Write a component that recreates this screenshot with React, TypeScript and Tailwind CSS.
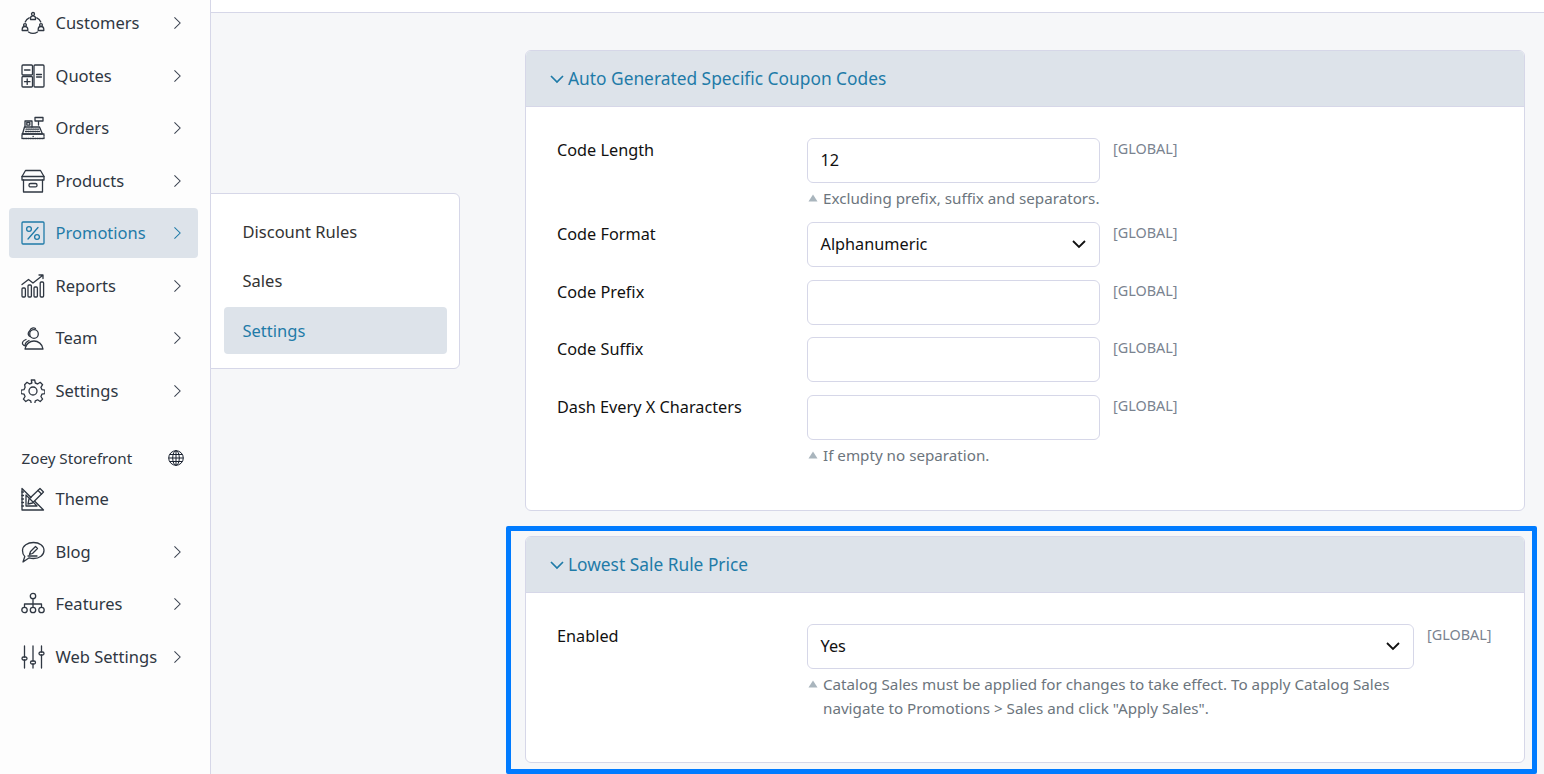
import React from "react";

const S = { fill: "none", stroke: "currentColor", strokeWidth: 1.3, strokeLinecap: "round" as const, strokeLinejoin: "round" as const };

const Svg = ({ children }: { children: React.ReactNode }) => (
  <svg viewBox="0 0 24 24" className="w-6 h-6 shrink-0" {...S}>{children}</svg>
);

const icons: Record<string, React.ReactNode> = {
  customers: (
    <Svg>
      <circle cx="12" cy="3" r="1.5" /><path d="M9.500 8.500v-1.200a2.500 2.500 0 0 1 5 0v1.200z" />
      <circle cx="4" cy="14" r="1.400" /><path d="M1.200 19.500v-1.200a2.800 2.800 0 0 1 5.600 0v1.200z" />
      <circle cx="20" cy="14" r="1.400" /><path d="M17.200 19.500v-1.200a2.800 2.800 0 0 1 5.600 0v1.200z" />
      <path d="M8.200 6.800A8.600 8.600 0 0 0 4.200 11M15.800 6.800a8.600 8.600 0 0 1 4 4.200M7.500 21a8.500 8.500 0 0 0 9 0" />
    </Svg>
  ),
  quotes: (
    <Svg>
      <rect x="1" y="1" width="10.500" height="10" rx="1" /><rect x="1" y="12.500" width="10.500" height="10.500" rx="1" />
      <rect x="13" y="1" width="10" height="22" rx="1" />
      <path d="M3.500 6h5.500M3.500 17.700h5.500M6.200 15v5.400" /><path d="M15.500 10.500h5M15.500 13h5" />
    </Svg>
  ),
  orders: (
    <Svg>
      <path d="M4 11V5h7v6M14 5V1.500h8V5zM17.500 5v4" /><rect x="5.800" y="6.500" width="3" height="2.600" />
      <path d="M3.500 11h15l3 7H1.500z" /><path d="M1 18h22v4.500H1zM5 13.200h13M4.500 15.500h14" strokeDasharray="1.300 1" />
      <path d="M12 20.300h.3" />
    </Svg>
  ),
  products: (
    <Svg>
      <path d="M4.500 1.500h15L23 7.500V11H1V7.500z" /><path d="M1 7.500h22" />
      <path d="M2.500 11v12h19V11" /><rect x="8" y="14.500" width="8" height="3.400" rx="1.500" />
    </Svg>
  ),
  promotions: (
    <Svg>
      <rect x="1" y="1" width="22" height="22" rx="1" />
      <path d="M17 6.500 7 18" /><circle cx="8" cy="8" r="2.400" /><circle cx="16" cy="16" r="2.400" />
    </Svg>
  ),
  reports: (
    <Svg>
      <rect x="1" y="14" width="3.400" height="9" rx="1" /><rect x="7" y="11" width="3.400" height="12" rx="1" />
      <rect x="13" y="13" width="3.400" height="10" rx="1" /><rect x="19.200" y="8" width="3.400" height="15" rx="1" />
      <path d="M1 10.500 7.500 5.500l4.500 3.500 9.500-7.500M18 1h4v3.500" />
    </Svg>
  ),
  team: (
    <Svg>
      <circle cx="13" cy="8" r="4.300" /><path d="M9 4.500A3.600 3.600 0 0 1 14.500 2.500M9 4.500 7.500 6.500a3 3 0 0 0 1.500 4" />
      <path d="M5 13.500Q1 15 1.500 18Q2.500 20 5 20" />
      <path d="M4 23c.5-5 5-8 9-8s8.500 3 9 8z" /><path d="M8 14.500Q4.500 16 4 19" />
    </Svg>
  ),
  settings: (
    <Svg>
      <circle cx="12" cy="12" r="4" />
      <path d="M10.300 1h3.400l.6 3a8.300 8.300 0 0 1 2.300 1l2.600-1.700 2.400 2.400-1.700 2.600a8.300 8.300 0 0 1 1 2.300l3 .6v3.400l-3 .6a8.300 8.300 0 0 1-1 2.300l1.700 2.600-2.400 2.400-2.600-1.700a8.300 8.300 0 0 1-2.300 1l-.6 3h-3.400l-.6-3a8.300 8.300 0 0 1-2.300-1l-2.600 1.700-2.400-2.400 1.700-2.600a8.300 8.300 0 0 1-1-2.300l-3-.6v-3.400l3-.6a8.300 8.300 0 0 1 1-2.300L3.600 5.700 6 3.300 8.600 5a8.300 8.300 0 0 1 2.300-1z" />
    </Svg>
  ),
  theme: (
    <Svg>
      <path d="M1 1.500V23h21.500L14 14.500M1 1.500 10 10.500" /><path d="M1 5h1.500M1 8.500h1.500M1 12h1.500M1 15.500h1.500M1 19h1.500" />
      <path d="M5 8v11h11z" />
      <path d="M8 12 19 1.500l3.500 3.500L11.500 16 7 17z" /><path d="M17 3.500l3.500 3.500" />
    </Svg>
  ),
  blog: (
    <Svg>
      <path d="M12.500 2.500c6 0 10.500 3.500 10.500 8s-4.500 8-10.500 8c-1.500 0-3-.2-4.300-.7L2 22l1.800-5.500C2 15 1.500 12.800 1.500 10.500c0-4.500 5-8 11-8z" />
      <path d="M8.500 14.500l1-3 5-5 2 2-5 5zM7 16h9" />
    </Svg>
  ),
  features: (
    <Svg>
      <circle cx="12" cy="4" r="2.700" /><path d="M12 6.700V15M3.500 15v-3h17v3" />
      <circle cx="3.500" cy="18" r="2.700" /><circle cx="12" cy="18" r="2.700" /><circle cx="20.500" cy="18" r="2.700" />
    </Svg>
  ),
  web: (
    <Svg>
      <path d="M3.500 1v11M3.500 15v8M12 1v15M12 19v4M20.500 1v6M20.500 10v13" />
      <rect x="1" y="12" width="5" height="3" rx="1.500" /><rect x="9.500" y="16" width="5" height="3" rx="1.500" /><rect x="18" y="7" width="5" height="3" rx="1.500" />
    </Svg>
  ),
};

const Chevron = ({ className = "" }: { className?: string }) => (
  <svg viewBox="0 0 10 16" className={`w-[9px] h-[14px] ${className}`} fill="none" stroke="currentColor" strokeWidth="1.200">
    <path d="M1.500 1.500 8 8l-6.500 6.500" />
  </svg>
);

const Item = ({ icon, label, active, noArrow }: { icon: string; label: string; active?: boolean; noArrow?: boolean }) => (
  <div className={`flex items-center h-[50px] mb-[2.500px] pl-[12px] pr-[16px] rounded-[4px] ${active ? "bg-[#dde3ea] text-[#1f7ba8]" : "text-[#2f3742]"}`}>
    {icons[icon]}
    <span className="ml-[10.500px] pt-px flex-1 text-[16.500px] whitespace-nowrap">{label}</span>
    {!noArrow && <Chevron className={active ? "text-[#1f7ba8]" : "text-[#3a4250]"} />}
  </div>
);

const Sidebar = () => (
  <aside className="w-[211px] shrink-0 h-full bg-[#fdfdfd] border-r border-[#d6d7e8] pl-[9px] pr-[12px]">
    <div className="-mt-[2px]">
      <Item icon="customers" label="Customers" />
      <Item icon="quotes" label="Quotes" />
      <Item icon="orders" label="Orders" />
      <Item icon="products" label="Products" />
      <Item icon="promotions" label="Promotions" active />
      <Item icon="reports" label="Reports" />
      <Item icon="team" label="Team" />
      <Item icon="settings" label="Settings" />
    </div>
    <div className="flex items-center justify-between h-[24px] mt-[30px] mb-[4.500px] pl-[12.500px] pr-[14px] text-[15.200px] text-[#2f3742]">
      <span className="pt-px">Zoey Storefront</span>
      <svg viewBox="0 0 16 16" className="w-4 h-4" fill="none" stroke="#1a2230" strokeWidth="1">
        <circle cx="8" cy="8" r="7.300" /><ellipse cx="8" cy="8" rx="3.300" ry="7.300" /><path d="M8 .7v14.600M.7 8h14.600M1.700 4.500h12.600M1.700 11.500h12.600" />
      </svg>
    </div>
    <Item icon="theme" label="Theme" noArrow />
    <Item icon="blog" label="Blog" />
    <Item icon="features" label="Features" />
    <Item icon="web" label="Web Settings" />
  </aside>
);

const SubMenu = () => (
  <div className="w-[250px] h-[176px] shrink-0 mt-[180px] -ml-px bg-white border border-[#d6d7e8] rounded-r-[6px] pl-[13px] pr-[12px] pt-[13px] text-[16.500px] text-[#333]">
    <div className="h-[49px] flex items-center pl-[18.500px] pt-[2px]">Discount Rules</div>
    <div className="h-[50px] mb-px flex items-center pl-[18.500px]">Sales</div>
    <div className="h-[47px] flex items-center pl-[18.500px] pt-[2px] bg-[#dde3ea] rounded-[4px] text-[#1f7ba8]">Settings</div>
  </div>
);

const Panel = ({ title, className, children }: { title: string; className: string; children: React.ReactNode }) => (
  <section className={`w-[1000px] bg-white border border-[#d6d7e8] rounded-[6px] overflow-hidden ${className}`}>
    <header className="h-[56px] bg-[#dde3ea] border-b border-[#d6d7e8] flex items-center pl-[24px] text-[#1f7ba8] text-[17.330px]">
      <svg viewBox="0 0 14 9" className="w-[14px] h-[9px] mr-[4px] mt-[2px]" fill="none" stroke="currentColor" strokeWidth="1.700"><path d="M1 1l6 6 6-6" /></svg>
      <span className="pt-px">{title}</span>
    </header>
    <div className="pt-[31px] pl-[31px]">{children}</div>
  </section>
);

const Global = () => <span className="block mt-px text-[14.400px] leading-[20px] text-[#7a8390]">[GLOBAL]</span>;

const Hint = ({ children }: { children: React.ReactNode }) => (
  <div className="flex text-[15.200px] leading-[24px] text-[#6c757d] mt-[3px]">
    <svg viewBox="0 0 10 8" className="w-[10px] h-[8px] mt-[8px] mr-[5px] ml-[1px] shrink-0"><path d="M5 .5 9.500 7.500H.5z" fill="#a9b5bd" /></svg>
    <span>{children}</span>
  </div>
);

const Field = ({ label, value, select, width = "w-[293px]", hint, className = "mb-[12.500px]" }: { label: string; value?: string; select?: boolean; width?: string; hint?: React.ReactNode; className?: string }) => (
  <div className={`flex ${className}`}>
    <label className="w-[250px] shrink-0 text-[16.250px] leading-[24px] text-[#111]">{label}</label>
    <div className={`${width} shrink-0`}>
      <div className="h-[45px] border border-[#d6d7e8] rounded-[6px] bg-white flex items-center justify-between pl-[12.500px] pr-[13px] text-[16.250px] text-[#111]">
        <span>{value}</span>
        {select && <svg viewBox="0 0 14 9" className="w-[14px] h-[9px]" fill="none" stroke="#111" strokeWidth="1.800"><path d="M1 1l6 6 6-6" /></svg>}
      </div>
      {hint && <Hint>{hint}</Hint>}
    </div>
    <div className="ml-[13px]"><Global /></div>
  </div>
);

export default function App() {
  return (
    <div className="relative flex h-[774px] w-[1544px] overflow-hidden bg-[#f6f7f9] font-['Noto_Sans','Open_Sans',sans-serif]">
      <Sidebar />
      <main className="flex-1 min-w-0">
        <div className="h-[13px] bg-white border-b border-[#d6d7e8]" />
        <div className="flex">
          <SubMenu />
          <div className="ml-[65px] pt-[37px]">
            <Panel title="Auto Generated Specific Coupon Codes" className="h-[461px]">
              <Field label="Code Length" value="12" hint="Excluding prefix, suffix and separators." className="mb-[12px]" />
              <Field label="Code Format" value="Alphanumeric" select />
              <Field label="Code Prefix" />
              <Field label="Code Suffix" />
              <Field label="Dash Every X Characters" hint="If empty no separation." />
            </Panel>
            <Panel title="Lowest Sale Rule Price" className="h-[227px] mt-[25px]">
              <Field
                label="Enabled"
                value="Yes"
                select
                width="w-[607px]"
                hint={<>Catalog Sales must be applied for changes to take effect. To apply Catalog Sales navigate to Promotions &gt; Sales and click "Apply Sales".</>}
              />
            </Panel>
          </div>
        </div>
      </main>
      <div className="absolute left-[506px] top-[526px] w-[1031px] h-[248px] border-[5px] border-[#007bff] rounded-[2px] pointer-events-none" />
    </div>
  );
}
